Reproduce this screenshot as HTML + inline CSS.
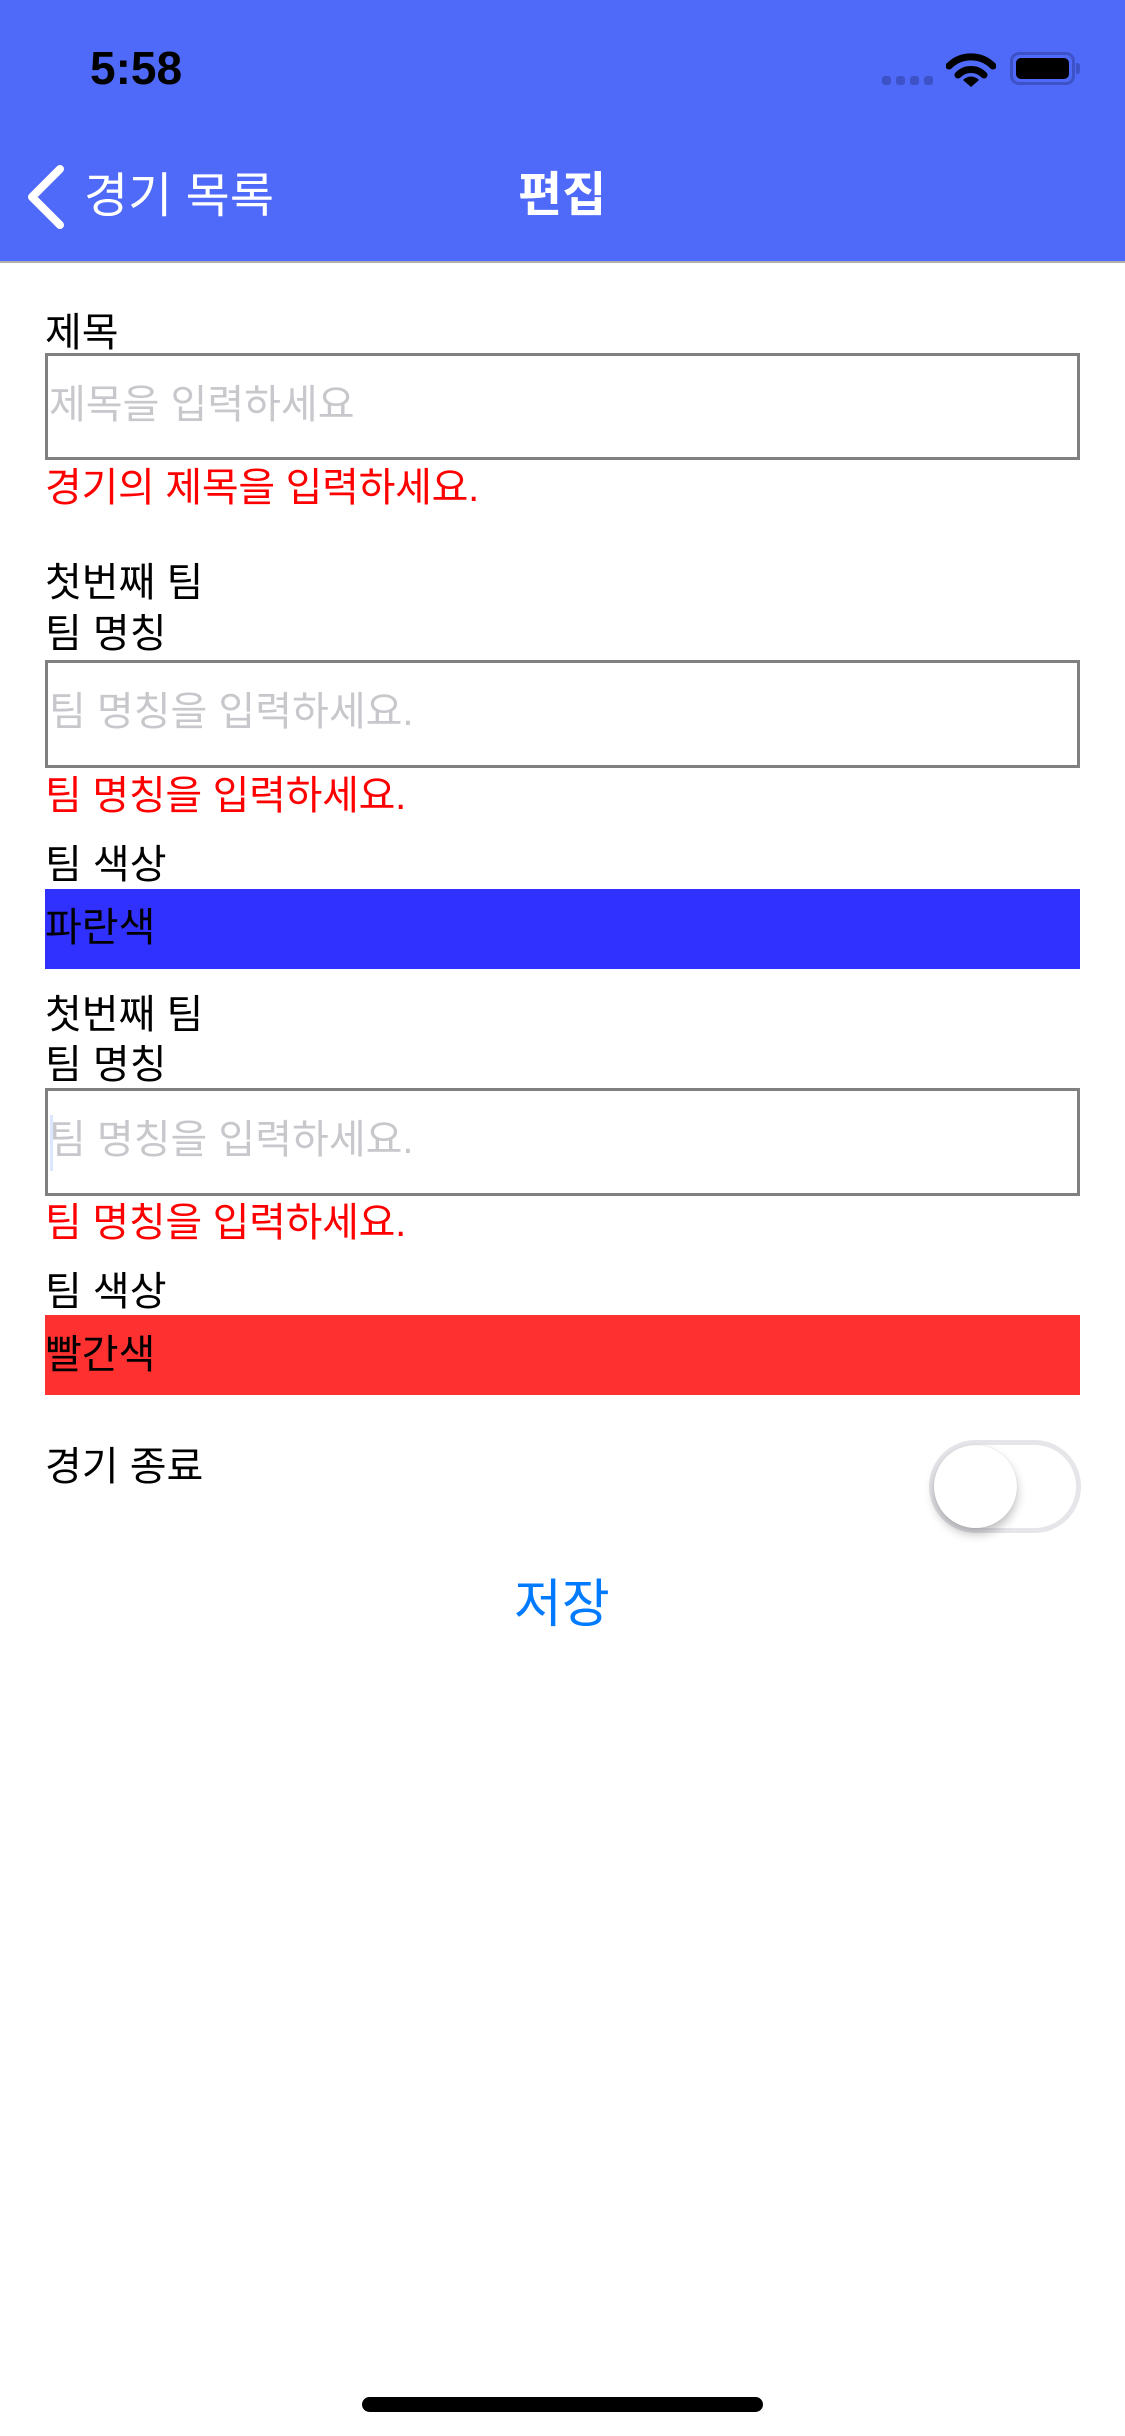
<!DOCTYPE html>
<html><head><meta charset="utf-8"><style>
*{margin:0;padding:0;box-sizing:border-box}
body{width:1125px;height:2436px;background:#fff;position:relative;overflow:hidden;font-family:"Liberation Sans","Noto Sans CJK KR",sans-serif}
.a{position:absolute;line-height:1;white-space:nowrap}
.l{left:45px;font-size:40px;color:#000}
.e{left:45px;font-size:40px;color:#ff0000;letter-spacing:-0.3px}
.in{position:absolute;left:45px;width:1035px;border:3px solid #808080;background:#fff}
.ph{position:absolute;left:1px;font-size:40px;color:#c7c7cc;line-height:1}
</style></head><body>
<div style="position:absolute;left:0;top:0;width:1125px;height:263px;background:#4f6af8;border-bottom:2px solid #b0b0b0"></div>
<div class="a" style="left:90px;top:45px;font-size:46px;font-weight:bold;color:#000">5:58</div>
<div style="position:absolute;left:882px;top:76px;width:9px;height:9px;border-radius:3px;background:#3c52c6"></div>
<div style="position:absolute;left:896px;top:76px;width:9px;height:9px;border-radius:3px;background:#3c52c6"></div>
<div style="position:absolute;left:910px;top:76px;width:9px;height:9px;border-radius:3px;background:#3c52c6"></div>
<div style="position:absolute;left:924px;top:76px;width:9px;height:9px;border-radius:3px;background:#3c52c6"></div>
<svg style="position:absolute;left:946px;top:50px" width="50" height="38" viewBox="0 0 50 38">
<path d="M3 16 A31 31 0 0 1 47 16" stroke="#000" stroke-width="7" fill="none" stroke-linecap="round"/>
<path d="M12 25 A18 18 0 0 1 38 25" stroke="#000" stroke-width="7" fill="none" stroke-linecap="round"/>
<path d="M17 30 L25 37 L33 30 A11 11 0 0 0 17 30Z" fill="#000"/></svg>
<div style="position:absolute;left:1010px;top:52px;width:65px;height:33px;border:3px solid #3c52c6;border-radius:9px;padding:3px"><div style="width:100%;height:100%;background:#000;border-radius:5px"></div></div>
<div style="position:absolute;left:1076px;top:63px;width:4px;height:11px;background:#3c52c6;border-radius:0 3px 3px 0"></div>
<svg style="position:absolute;left:24px;top:163px" width="44" height="68" viewBox="0 0 44 68"><path d="M36 6 L8 34 L36 62" stroke="#fff" stroke-width="8" fill="none" stroke-linecap="round" stroke-linejoin="round"/></svg>
<div class="a" style="left:84px;top:173px;font-size:48px;color:#fff;letter-spacing:0px">경기 목록</div>
<div class="a" style="left:518px;top:172px;font-size:48px;color:#fff;font-weight:bold">편집</div>

<div class="a l" style="top:313px">제목</div>
<div class="in" style="top:353px;height:107px"><div class="ph" style="top:29px">제목을 입력하세요</div></div>
<div class="a e" style="top:468px">경기의 제목을 입력하세요.</div>

<div class="a l" style="top:563px">첫번째 팀</div>
<div class="a l" style="top:614px">팀 명칭</div>
<div class="in" style="top:660px;height:108px"><div class="ph" style="top:29px">팀 명칭을 입력하세요.</div></div>
<div class="a e" style="top:776px">팀 명칭을 입력하세요.</div>
<div class="a l" style="top:845px">팀 색상</div>
<div style="position:absolute;left:45px;top:889px;width:1035px;height:80px;background:#3030ff"></div>
<div class="a l" style="top:908px">파란색</div>

<div class="a l" style="top:995px">첫번째 팀</div>
<div class="a l" style="top:1045px">팀 명칭</div>
<div class="in" style="top:1088px;height:108px"><div style="position:absolute;left:2px;top:24px;width:3px;height:56px;background:#dde6ff"></div><div class="ph" style="top:29px">팀 명칭을 입력하세요.</div></div>
<div class="a e" style="top:1203px">팀 명칭을 입력하세요.</div>
<div class="a l" style="top:1272px">팀 색상</div>
<div style="position:absolute;left:45px;top:1315px;width:1035px;height:80px;background:#ff3030"></div>
<div class="a l" style="top:1335px">빨간색</div>

<div class="a l" style="top:1447px">경기 종료</div>
<div style="position:absolute;left:929px;top:1440px;width:152px;height:93px;border-radius:47px;border:5px solid #e5e5ea;background:#fff"></div>
<div style="position:absolute;left:934px;top:1445px;width:83px;height:83px;border-radius:50%;background:#fff;box-shadow:0 6px 10px rgba(0,0,0,0.25),0 0 1px rgba(0,0,0,0.2)"></div>

<div class="a" style="left:514px;top:1579px;font-size:52px;color:#007aff">저장</div>

<div style="position:absolute;left:362px;top:2397px;width:401px;height:15px;border-radius:8px;background:#000"></div>
</body></html>
